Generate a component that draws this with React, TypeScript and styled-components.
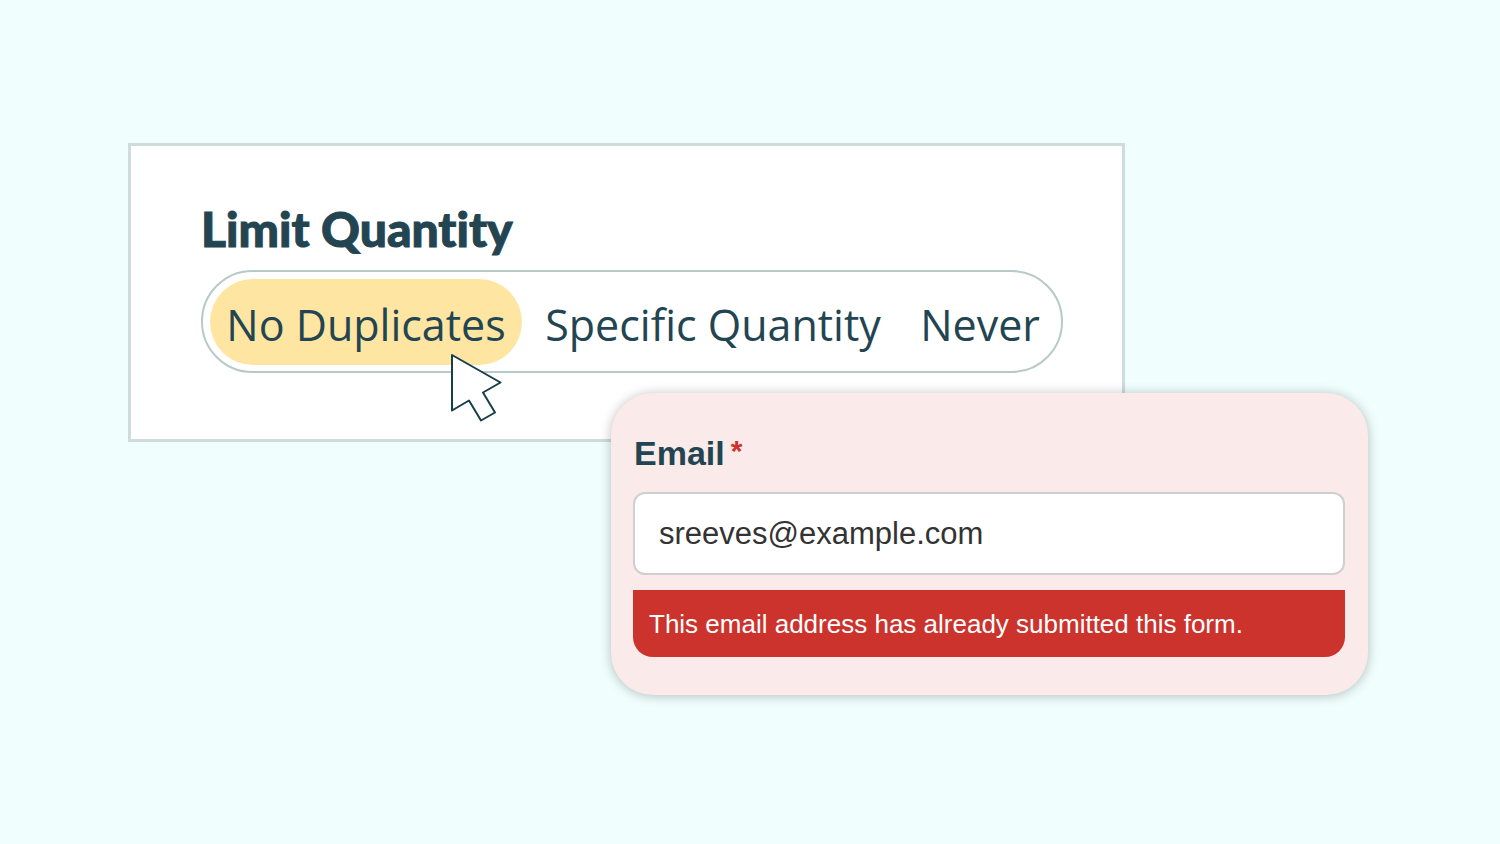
import React, { useState } from "react";
import styled, { createGlobalStyle } from "styled-components";

const GlobalStyle = createGlobalStyle`
  *, *::before, *::after {
    box-sizing: border-box;
  }
  body {
    margin: 0;
    background: #f0fefe;
  }
`;

const Stage = styled.main`
  min-height: 100vh;
  padding: 143px 132px 149px 128px;
  background: #f0fefe;
`;

const SettingsPanel = styled.section`
  margin-right: 243px;
  height: 299px;
  padding: 54px 59px 0 70px;
  background: #ffffff;
  border: 3px solid #cfdcdc;
`;

const OptionGroup = styled.fieldset`
  margin: 0;
  padding: 0;
  border: 0;
  min-width: 0;
`;

const GroupTitle = styled.legend`
  padding: 0;
  font-family: Lato, "Liberation Sans", sans-serif;
  font-size: 48px;
  font-weight: 900;
  font-variant-ligatures: none;
  line-height: 58px;
  color: #234551;
  -webkit-text-stroke: 1px #234551;
`;

const Segments = styled.div`
  display: grid;
  grid-template-columns: 312fr 370fr 152fr;
  gap: 6px;
  margin-top: 12px;
  padding: 7px 5px 6px 7px;
  border: 2px solid #b8c9c8;
  border-radius: 52px;
`;

const Segment = styled.label<{ $active: boolean }>`
  position: relative;
  display: flex;
  align-items: center;
  justify-content: center;
  height: 86px;
  padding-top: 5px;
  border-radius: 43px;
  background: ${({ $active }) => ($active ? "#ffe5a2" : "transparent")};
  font-family: "Open Sans", "Noto Sans", sans-serif;
  font-size: 43px;
  line-height: 60px;
  white-space: nowrap;
  color: #234551;
  cursor: pointer;
`;

const SegmentRadio = styled.input`
  position: absolute;
  inset: 0;
  width: 100%;
  height: 100%;
  margin: 0;
  opacity: 0;
  cursor: pointer;
`;

const Pointer = styled.svg`
  position: absolute;
  left: 239px;
  top: 73px;
  z-index: 1;
  pointer-events: none;
`;

const FieldCard = styled.section`
  position: relative;
  margin: -49px 0 0 483px;
  padding: 40px 23px 38px 22px;
  background: #faeaea;
  border-radius: 42px;
  box-shadow: 0 1px 12px rgba(0, 0, 0, 0.26);
  font-family: "Liberation Sans", Arial, sans-serif;
`;

const FieldLabel = styled.label`
  display: flex;
  align-items: flex-start;
  gap: 6px;
  padding-left: 1px;
  font-size: 34px;
  font-weight: 700;
  line-height: 40px;
  color: #234551;
`;

const Required = styled.span`
  font-size: 30px;
  line-height: 36px;
  color: #cc332d;
`;

const EmailInput = styled.input`
  display: block;
  width: 100%;
  height: 83px;
  margin-top: 19px;
  padding: 0 24px;
  border: 2px solid #cfcfcf;
  border-radius: 12px;
  background: #ffffff;
  font-family: inherit;
  font-size: 31px;
  color: #333333;
  outline: none;
`;

const ErrorMessage = styled.p`
  margin: 15px 0 0;
  padding: 17px 16px 15px;
  border-radius: 0 0 20px 20px;
  background: #cc332d;
  font-size: 26px;
  line-height: 35px;
  color: #ffffff;
`;

const limits = ["No Duplicates", "Specific Quantity", "Never"];

export default function App() {
  const [limit, setLimit] = useState(limits[0]);
  const [email, setEmail] = useState("sreeves@example.com");

  return (
    <>
      <GlobalStyle />
      <Stage>
        <SettingsPanel>
          <OptionGroup>
            <GroupTitle>Limit Quantity</GroupTitle>
            <Segments>
              {limits.map((name, index) => (
                <Segment key={name} $active={limit === name}>
                  <SegmentRadio
                    type="radio"
                    name="limit"
                    value={name}
                    checked={limit === name}
                    onChange={() => setLimit(name)}
                  />
                  {name}
                  {index === 0 && (
                    <Pointer width="54" height="70" viewBox="0 0 54 70" aria-hidden="true">
                      <path
                        d="M3 3L51.500 30.500L34 40.500L46 60.500L32 68.500L20 48.500L3 58.500Z"
                        fill="#ffffff"
                        stroke="#173f4b"
                        strokeWidth="2"
                        strokeLinejoin="round"
                      />
                    </Pointer>
                  )}
                </Segment>
              ))}
            </Segments>
          </OptionGroup>
        </SettingsPanel>
        <FieldCard>
          <FieldLabel htmlFor="email">
            Email<Required>*</Required>
          </FieldLabel>
          <EmailInput
            id="email"
            type="email"
            required
            value={email}
            aria-describedby="email-error"
            onChange={(event) => setEmail(event.target.value)}
          />
          <ErrorMessage id="email-error" role="alert">
            This email address has already submitted this form.
          </ErrorMessage>
        </FieldCard>
      </Stage>
    </>
  );
}
